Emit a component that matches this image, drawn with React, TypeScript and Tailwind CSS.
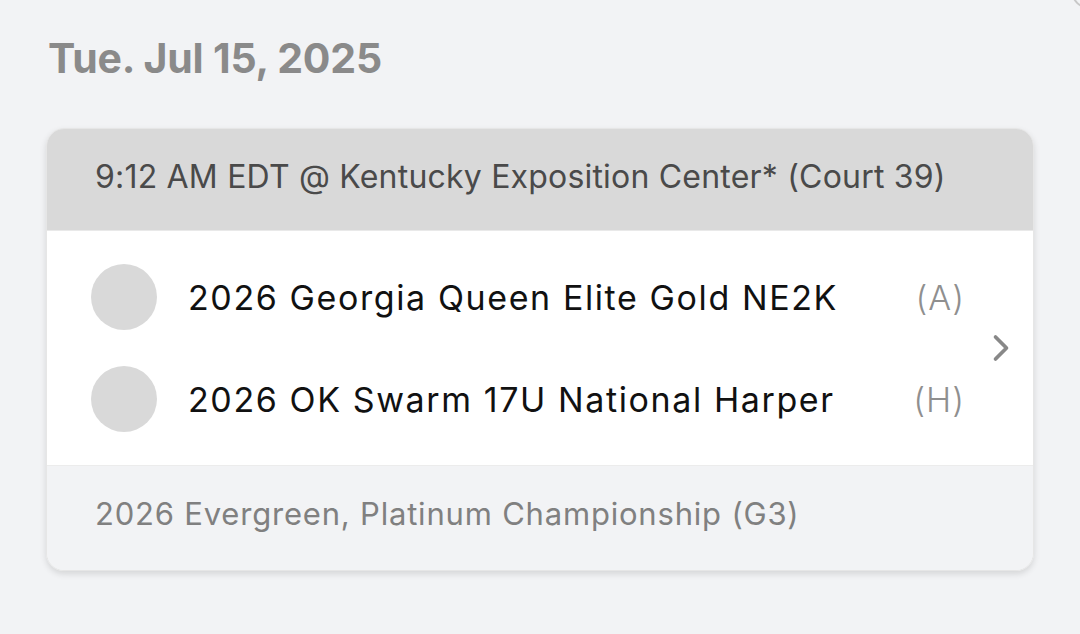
import React from 'react';
import { ChevronRight } from 'lucide-react';

interface Team {
  name: string;
  side: string;
}

const teams: Team[] = [
  { name: '2026 Georgia Queen Elite Gold NE2K', side: '(A)' },
  { name: '2026 OK Swarm 17U National Harper', side: '(H)' },
];

const App: React.FC = () => {
  return (
    <div
      className="relative w-[1080px] h-[634px] overflow-hidden bg-[#f2f3f5] pl-[46px] pr-[46px]"
      style={{ fontFamily: 'Inter, "Open Sans", sans-serif' }}
    >
      {/* partial button peeking at top right */}
      <div className="absolute -top-[22px] -right-[22px] w-[30px] h-[30px] rounded-full border-2 border-[#c8c8c8]" />

      <h1 className="pt-[33px] pl-[2px] text-[41px] leading-[50px] font-bold text-[#8a8a8a] tracking-[-0.2px]">
        Tue. Jul 15, 2025
      </h1>

      <div className="mt-[45px] w-[988px] rounded-[18px] overflow-hidden border border-[#e6e6e6] shadow-[0_3px_6px_rgba(0,0,0,0.12)]">
        <div className="h-[102px] bg-[#d9d9d9] flex items-center pl-[48px] pb-[6px] text-[32px] tracking-[0.2px] text-[#4a4a4a] border-b border-[#e9e9e9]">
          9:12 AM EDT @ Kentucky Exposition Center* (Court 39)
        </div>

        <div className="bg-white h-[235px] flex items-center border-b border-[#ececec]">
          <div className="flex-1 flex flex-col gap-[38px] pl-[44px]">
            {teams.map((t) => (
              <div key={t.name} className="flex items-center h-[64px]">
                <div className="w-[66px] h-[66px] rounded-full bg-[#d9d9d9] shrink-0" />
                <span className="ml-[31px] flex-1 text-[34px] tracking-[1.6px] text-[#111111]">{t.name}</span>
                <span className="w-[70px] text-[34px] tracking-[1px] font-light text-[#8f8f8f] text-right">{t.side}</span>
              </div>
            ))}
          </div>
          <div className="w-[68px] flex justify-center pl-[3px]">
            <ChevronRight size={44} strokeWidth={2} className="text-[#888888]" />
          </div>
        </div>

        <div className="h-[104px] bg-[#f2f3f5] flex items-center pl-[48px] pb-[8px] text-[31px] tracking-[0.8px] text-[#808080]">
          2026 Evergreen, Platinum Championship (G3)
        </div>
      </div>
    </div>
  );
};

export default App;
